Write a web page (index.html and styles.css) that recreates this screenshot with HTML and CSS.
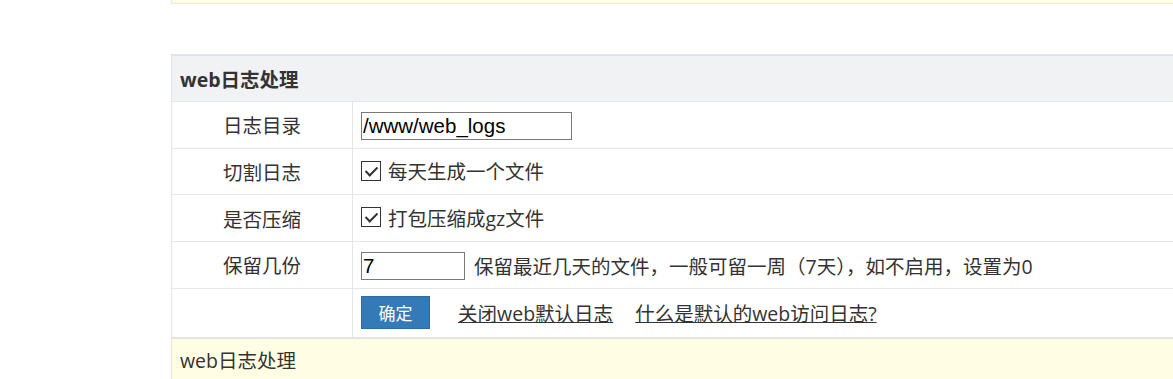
FILE: index.html
```html
<!DOCTYPE html>
<html>
<head>
    <title>web日志处理</title>
    <link rel="stylesheet" href="styles.css">
</head>
<body>
    <div class="page">
        <div class="notice notice-top"></div>

        <table class="form-table">
            <tr>
                <th colspan="2" class="table-title">web日志处理</th>
            </tr>
            <tr>
                <td class="label">日志目录</td>
                <td class="field"><input type="text" class="text-input" value="/www/web_logs"></td>
            </tr>
            <tr>
                <td class="label">切割日志</td>
                <td class="field">
                    <label class="check"><input type="checkbox" checked><span>每天生成一个文件</span></label>
                </td>
            </tr>
            <tr>
                <td class="label">是否压缩</td>
                <td class="field">
                    <label class="check"><input type="checkbox" checked><span>打包压缩成gz文件</span></label>
                </td>
            </tr>
            <tr>
                <td class="label">保留几份</td>
                <td class="field">
                    <input type="text" class="num-input" value="7">
                    <span class="hint">保留最近几天的文件，一般可留一周（7天），如不启用，设置为0</span>
                </td>
            </tr>
            <tr>
                <td class="label"></td>
                <td class="field">
                    <button class="btn-primary">确定</button>
                    <a href="#" class="link first-link">关闭web默认日志</a>
                    <a href="#" class="link">什么是默认的web访问日志?</a>
                </td>
            </tr>
        </table>

        <div class="notice notice-bottom">web日志处理</div>
    </div>
</body>
</html>
```

FILE: styles.css
```css
body, html {
    margin: 0;
    padding: 0;
    overflow: hidden;
    background: #fff;
    font-family: "Open Sans", "Noto Sans CJK SC", sans-serif;
    color: #333;
}

.page {
    margin-left: 171px;
    width: 1100px;
}

.notice {
    background-color: #fffee3;
    border-left: 1px solid #e6e6e6;
}

.notice-top {
    height: 3px;
    border-bottom: 1px solid #e8e8e2;
}

.notice-bottom {
    height: 40px;
    padding-left: 8px;
    font-size: 19.5px;
    line-height: 44px;
}

.form-table {
    margin-top: 50px;
    width: 100%;
    border-collapse: collapse;
    border-left: 1px solid #e4e6e9;
    border-top: 2px solid #e1e3e6;
    border-bottom: 2px solid #e1e3e6;
    font-size: 19.5px;
}

.table-title {
    background-color: #f1f2f4;
    text-align: left;
    font-weight: bold;
    height: 45px;
    padding: 0 0 0 8px;
    border-bottom: 1px solid #e4e6e9;
}

.form-table td {
    height: 45.7px;
    padding: 0;
    border-bottom: 1px solid #e4e6e9;
}

.form-table tr:last-child td {
    height: 48px;
    border-bottom: none;
}

.label {
    width: 180px;
    text-align: center;
    border-right: 1px solid #e4e6e9;
}

.field {
    padding-left: 8px !important;
}

.text-input, .num-input {
    box-sizing: border-box;
    height: 28px;
    padding: 0 0 0 1px;
    border: 1px solid #7a7a7a;
    font-family: "Liberation Sans", Arial, sans-serif;
    font-size: 20.5px;
    color: #000;
    vertical-align: middle;
    outline: none;
}

.text-input {
    width: 211px;
}

.num-input {
    width: 104px;
    margin-right: 4px;
}

.hint {
    vertical-align: middle;
}

.check {
    display: inline-flex;
    align-items: center;
    gap: 7px;
}

.check input {
    appearance: none;
    -webkit-appearance: none;
    margin: 0;
    width: 20px;
    height: 20px;
    border: 1px solid #333;
    position: relative;
    background: #fff;
}

.check input:checked::after {
    content: "";
    position: absolute;
    left: 6px;
    top: 2px;
    width: 5px;
    height: 10px;
    border-right: 2px solid #333;
    border-bottom: 2px solid #333;
    transform: rotate(45deg);
}

.btn-primary {
    width: 69px;
    height: 33px;
    background-color: #337ab7;
    border: 1px solid #2e6da4;
    color: #fff;
    font-family: "Noto Sans CJK SC", sans-serif;
    font-size: 17px;
    padding: 0;
    vertical-align: middle;
    cursor: pointer;
}

.link {
    color: #333;
    text-decoration: underline;
    vertical-align: middle;
    margin-left: 17px;
}

.first-link {
    margin-left: 23px;
}
```
